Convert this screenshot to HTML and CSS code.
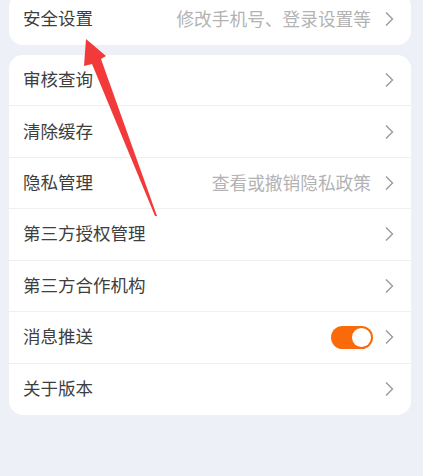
FILE: index.html
```html
<!DOCTYPE html>
<html lang="zh-CN">
<head>
<meta charset="utf-8">
<title>设置</title>
<link rel="stylesheet" href="styles.css">
</head>
<body>
<div class="page">
  <div class="card card-top">
    <div class="row">
      <span class="label">安全设置</span>
      <span class="right">
        <span class="hint">修改手机号、登录设置等</span>
        <svg class="chev" viewBox="0 0 10 16"><path d="M2 1.5 L8.5 8 L2 14.5" /></svg>
      </span>
    </div>
  </div>
  <div class="card">
    <div class="row">
      <span class="label">审核查询</span>
      <span class="right"><svg class="chev" viewBox="0 0 10 16"><path d="M2 1.5 L8.5 8 L2 14.5" /></svg></span>
    </div>
    <div class="row">
      <span class="label">清除缓存</span>
      <span class="right"><svg class="chev" viewBox="0 0 10 16"><path d="M2 1.5 L8.5 8 L2 14.5" /></svg></span>
    </div>
    <div class="row">
      <span class="label">隐私管理</span>
      <span class="right">
        <span class="hint">查看或撤销隐私政策</span>
        <svg class="chev" viewBox="0 0 10 16"><path d="M2 1.5 L8.5 8 L2 14.5" /></svg>
      </span>
    </div>
    <div class="row">
      <span class="label">第三方授权管理</span>
      <span class="right"><svg class="chev" viewBox="0 0 10 16"><path d="M2 1.5 L8.5 8 L2 14.5" /></svg></span>
    </div>
    <div class="row">
      <span class="label">第三方合作机构</span>
      <span class="right"><svg class="chev" viewBox="0 0 10 16"><path d="M2 1.5 L8.5 8 L2 14.5" /></svg></span>
    </div>
    <div class="row">
      <span class="label">消息推送</span>
      <span class="right">
        <span class="toggle"><span class="knob"></span></span>
        <svg class="chev" viewBox="0 0 10 16"><path d="M2 1.5 L8.5 8 L2 14.5" /></svg>
      </span>
    </div>
    <div class="row">
      <span class="label">关于版本</span>
      <span class="right"><svg class="chev" viewBox="0 0 10 16"><path d="M2 1.5 L8.5 8 L2 14.5" /></svg></span>
    </div>
  </div>
  <svg class="arrow" viewBox="0 0 423 476" width="423" height="476">
    <polygon points="86,39 106,56 101,59 157,216 155,216 92,64 84,66" />
  </svg>
</div>
</body>
</html>
```
FILE: styles.css
```css
html, body {
  margin: 0;
  padding: 0;
  background: #edf0f7;
}
body {
  font-family: "Noto Sans CJK SC", "Noto Sans", sans-serif;
  width: 423px;
  height: 476px;
  overflow: hidden;
}
.page {
  position: relative;
  width: 423px;
  height: 476px;
  display: flex;
  flex-direction: column;
  gap: 10px;
}
.card {
  margin-left: 9px;
  width: 402px;
  background: #ffffff;
  border-radius: 14px;
  display: flex;
  flex-direction: column;
}
.card-top {
  margin-top: -7px;
}
.row {
  box-sizing: border-box;
  height: 51.43px;
  display: flex;
  align-items: center;
  justify-content: space-between;
  padding: 0 17px 0 14px;
  border-bottom: 1px solid #efefef;
}
.card-top .row {
  height: 52px;
  border-bottom: none;
}
.row:last-child {
  border-bottom: none;
}
.label {
  font-size: 17.5px;
  color: #3e3e3e;
  line-height: 24px;
  margin-top: -2px;
}
.right {
  display: flex;
  align-items: center;
}
.hint {
  font-size: 17.7px;
  color: #b3b3b3;
  margin-right: 13px;
  line-height: 24px;
  margin-top: -2px;
}
.chev {
  width: 10px;
  height: 16px;
  fill: none;
  stroke: #9a9a9a;
  stroke-width: 1.4;
}
.toggle {
  position: relative;
  width: 42px;
  height: 23px;
  border-radius: 12px;
  background: #fa6a0a;
  margin-right: 11px;
}
.knob {
  position: absolute;
  right: 2px;
  top: 2px;
  width: 19px;
  height: 19px;
  border-radius: 50%;
  background: #ffffff;
}
.arrow {
  position: absolute;
  left: 0;
  top: 0;
  pointer-events: none;
}
.arrow polygon {
  fill: #f23a3a;
}
```
